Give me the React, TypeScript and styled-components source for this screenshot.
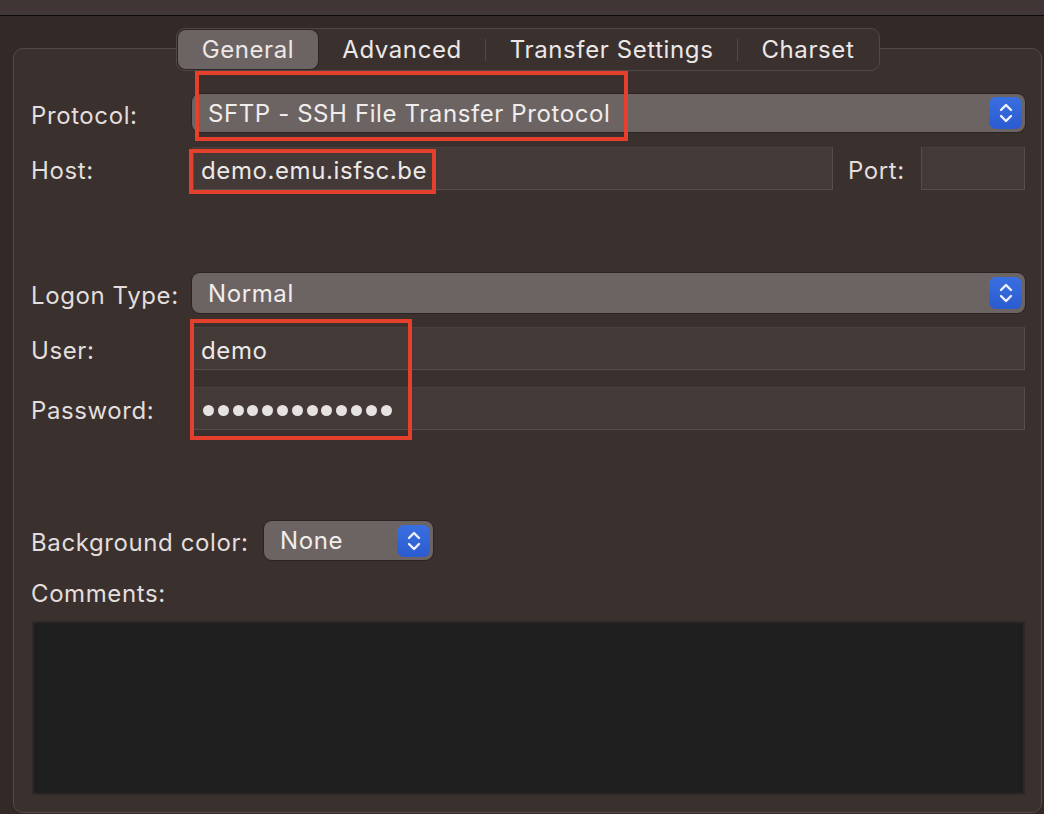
import { Fragment } from "react";
import styled, { createGlobalStyle } from "styled-components";

const GlobalStyle = createGlobalStyle`
  html, body {
    margin: 0;
    padding: 0;
    background: #332a28;
    height: 814px;
    overflow: hidden;
  }
  body {
    font-family: Inter, "Liberation Sans", sans-serif;
    color: #e4e0df;
    letter-spacing: 0.6px;
  }
`;

const TitleStrip = styled.div`
  height: 15px;
  background: #3f3635;
  border-bottom: 1px solid #0c0a0a;
`;

const Content = styled.div`
  padding: 32px 2px 0 13px;
`;

const Panel = styled.div`
  height: 765px;
  background: #3a302e;
  border: 1px solid #544a48;
  border-radius: 10px;
  box-sizing: border-box;
  display: flex;
  flex-direction: column;
`;

const TabBar = styled.div`
  align-self: center;
  margin: -21px 0 0 1px;
  height: 43px;
  box-sizing: border-box;
  display: flex;
  align-items: center;
  padding: 0 1px;
  background: #3a312f;
  border: 1px solid #514745;
  border-radius: 9px;
`;

const Tab = styled.div<{ $active?: boolean }>`
  height: 39px;
  display: flex;
  align-items: center;
  padding: 0 23.5px;
  font-size: 24px;
  color: #ece8e7;
  border-radius: 8px;
  background: ${(p) => (p.$active ? "#6c6462" : "transparent")};
  box-shadow: ${(p) => (p.$active ? "0 0 0 1px rgba(0,0,0,0.25)" : "none")};
`;

const TabSep = styled.div<{ $hidden?: boolean }>`
  width: 1px;
  height: 22px;
  background: ${(p) => (p.$hidden ? "transparent" : "#54494a")};
`;

const Form = styled.div`
  position: relative;
  margin-top: 23px;
  padding: 0 16px 0 17px;
  display: flex;
  flex-direction: column;
`;

const Row = styled.div<{ $top?: number }>`
  display: flex;
  align-items: center;
  margin-top: ${(p) => p.$top ?? 0}px;
`;

const Label = styled.div<{ $width?: number; $left?: number }>`
  width: ${(p) => (p.$width ? `${p.$width}px` : "auto")};
  margin-left: ${(p) => p.$left ?? 0}px;
  padding-top: 4px;
  flex: none;
  font-size: 24px;
  color: #e2dedd;
  white-space: nowrap;
`;

const Select = styled.div<{ $width?: number; $height: number }>`
  height: ${(p) => p.$height}px;
  width: ${(p) => (p.$width ? `${p.$width}px` : "auto")};
  flex: ${(p) => (p.$width ? "none" : "1")};
  box-sizing: border-box;
  display: flex;
  align-items: center;
  justify-content: space-between;
  padding: 0 3px 0 16px;
  background: #6c6462;
  border-radius: 8px;
  box-shadow: 0 0 0 1px rgba(20, 14, 13, 0.35);
  font-size: 24px;
  color: #f1edec;
  white-space: nowrap;
`;

const Stepper = styled.div`
  width: 33px;
  height: 32px;
  flex: none;
  border-radius: 7px;
  background: linear-gradient(#3a6fe0, #2a5bd0);
  display: flex;
  align-items: center;
  justify-content: center;
`;

const Field = styled.div<{ $width?: number }>`
  height: 43px;
  width: ${(p) => (p.$width ? `${p.$width}px` : "auto")};
  flex: ${(p) => (p.$width ? "none" : "1")};
  box-sizing: border-box;
  display: flex;
  align-items: center;
  padding: 4px 0 0 7px;
  background: #433a38;
  border: 1px solid #574d4b;
  border-top-color: #4a403e;
  font-size: 24px;
  color: #ece8e7;
  white-space: nowrap;
`;

const Dots = styled.div`
  display: flex;
  gap: 3.8px;
  padding-left: 2px;
`;

const Dot = styled.span`
  width: 11px;
  height: 11px;
  border-radius: 50%;
  background: #e6e2e1;
`;

const CommentsBox = styled.div`
  margin: 13px 0 0 1px;
  height: 174px;
  background: #1f1e1e;
  border: 2px solid #2f2826;
  box-sizing: border-box;
`;

const Highlight = styled.div<{ $left: number; $top: number; $w: number; $h: number }>`
  position: absolute;
  left: ${(p) => p.$left}px;
  top: ${(p) => p.$top}px;
  width: ${(p) => p.$w}px;
  height: ${(p) => p.$h}px;
  box-sizing: border-box;
  border: 4px solid #e5402b;
  pointer-events: none;
`;

function StepperIcon() {
  return (
    <Stepper>
      <svg width="18" height="24" viewBox="0 0 18 24" fill="none">
        <path d="M4 9 L9 4 L14 9" stroke="#eef2fb" strokeWidth="2.4" strokeLinecap="round" strokeLinejoin="round" />
        <path d="M4 15 L9 20 L14 15" stroke="#eef2fb" strokeWidth="2.4" strokeLinecap="round" strokeLinejoin="round" />
      </svg>
    </Stepper>
  );
}

const tabs = ["General", "Advanced", "Transfer Settings", "Charset"];

export default function App() {
  return (
    <>
      <GlobalStyle />
      <TitleStrip />
      <Content>
        <Panel>
          <TabBar>
            {tabs.map((t, i) => (
              <Fragment key={t}>
                {i > 0 && <TabSep $hidden={i === 1} />}
                <Tab $active={i === 0}>{t}</Tab>
              </Fragment>
            ))}
          </TabBar>
          <Form>
            <Row>
              <Label $width={161}>Protocol:</Label>
              <Select $height={38}>
                SFTP - SSH File Transfer Protocol
                <StepperIcon />
              </Select>
            </Row>
            <Row $top={15}>
              <Label $width={162}>Host:</Label>
              <Field>demo.emu.isfsc.be</Field>
              <Label $left={15} $width={73}>Port:</Label>
              <Field $width={104} />
            </Row>
            <Row $top={83}>
              <Label $width={161}>Logon Type:</Label>
              <Select $height={40}>
                Normal
                <StepperIcon />
              </Select>
            </Row>
            <Row $top={14}>
              <Label $width={162}>User:</Label>
              <Field>demo</Field>
            </Row>
            <Row $top={17}>
              <Label $width={162}>Password:</Label>
              <Field>
                <Dots>
                  {Array.from({ length: 13 }).map((_, i) => (
                    <Dot key={i} />
                  ))}
                </Dots>
              </Field>
            </Row>
            <Row $top={91}>
              <Label $width={233}>Background color:</Label>
              <Select $height={39} $width={169}>
                None
                <StepperIcon />
              </Select>
            </Row>
            <Row $top={15}>
              <Label>Comments:</Label>
            </Row>
            <CommentsBox />

            <Highlight $left={181} $top={-23} $w={433} $h={70} />
            <Highlight $left={175} $top={55} $w={247} $h={45} />
            <Highlight $left={176} $top={225} $w={222} $h={121} />
          </Form>
        </Panel>
      </Content>
    </>
  );
}
